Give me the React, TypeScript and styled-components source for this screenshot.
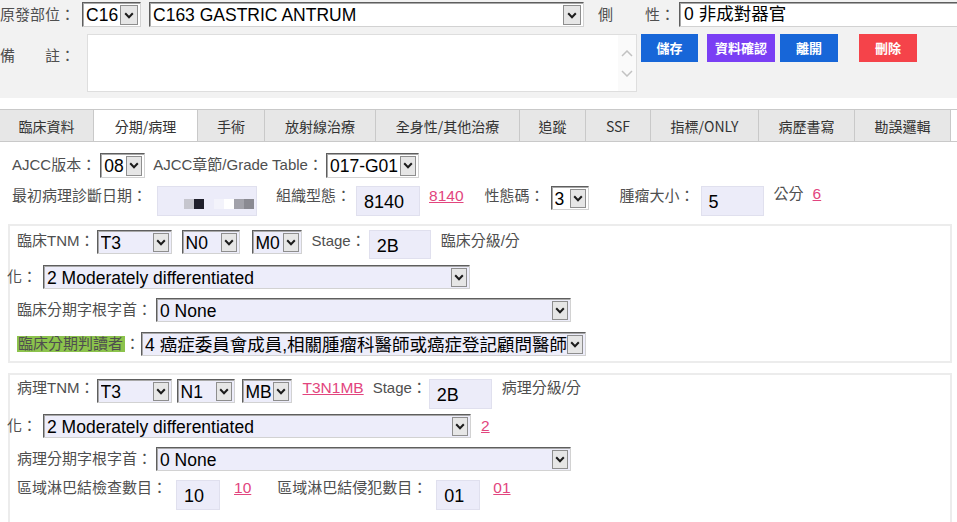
import React from 'react';
import styled, { createGlobalStyle } from 'styled-components';

const FONT = `"Liberation Sans", "Noto Sans CJK TC", sans-serif`;
const CJK = `"Noto Sans CJK TC", "Liberation Sans", sans-serif`;

const GlobalStyle = createGlobalStyle`
  html, body { margin: 0; padding: 0; background: #fff; }
  body { font-family: ${FONT}; }
`;

const Page = styled.div`
  width: 957px;
  height: 522px;
  overflow: hidden;
  background: #fff;
`;

const Header = styled.div`
  height: 98px;
  box-sizing: border-box;
  padding-top: 2px;
  background: #f2f2f2;
  display: flex;
  flex-direction: column;
`;

const Row = styled.div<{ $mt?: number; $ml?: number; $h?: number; $align?: string }>`
  display: flex;
  align-items: ${(p) => p.$align ?? 'center'};
  margin-top: ${(p) => p.$mt ?? 0}px;
  margin-left: ${(p) => p.$ml ?? 0}px;
  height: ${(p) => (p.$h ? `${p.$h}px` : 'auto')};
  white-space: nowrap;
`;

const Label = styled.span<{ $ml?: number; $mt?: number }>`
  font-family: ${FONT};
  font-size: 15px;
  line-height: 20px;
  color: #4f4f4f;
  white-space: nowrap;
  margin-left: ${(p) => p.$ml ?? 0}px;
  margin-top: ${(p) => p.$mt ?? 0}px;
`;

const Highlight = styled.span`
  display: inline-block;
  background: #8cc34c;
  height: 16px;
  line-height: 16px;
  padding: 0 2px 0 1px;
`;

const SelectFrame = styled.div<{ $w: number; $h: number; $ml: number; $bg: string }>`
  display: flex;
  align-items: center;
  box-sizing: border-box;
  flex: none;
  width: ${(p) => p.$w}px;
  height: ${(p) => p.$h}px;
  margin-left: ${(p) => p.$ml}px;
  border: 1px solid;
  border-color: #5e5e5e #d2d2d2 #d2d2d2 #5e5e5e;
  box-shadow: inset 1px 1px 0 #a8a8a8;
  background: ${(p) => p.$bg};
  padding: 2px 2px 1px 3px;
`;

const SelectText = styled.span`
  flex: 1;
  min-width: 0;
  overflow: hidden;
  font-family: ${FONT};
  font-size: 17.5px;
  line-height: 20px;
  color: #000;
  white-space: nowrap;
`;

const ArrowBox = styled.span<{ $w: number }>`
  flex: none;
  align-self: stretch;
  width: ${(p) => p.$w}px;
  box-sizing: border-box;
  background: #e6e6e6;
  border: 1px solid #8e8e8e;
  display: flex;
  align-items: center;
  justify-content: center;
`;

const Chevron = () => (
  <svg width="10" height="7" viewBox="0 0 10 7">
    <polyline points="1.2,1.3 5,5.2 8.8,1.3" fill="none" stroke="#1c1c1c" strokeWidth="2" />
  </svg>
);

type SelectProps = { value: string; w: number; h?: number; ml?: number; bg?: string; aw?: number };
const Select = ({ value, w, h = 24, ml = 0, bg = '#ededfa', aw = 16 }: SelectProps) => (
  <SelectFrame $w={w} $h={h} $ml={ml} $bg={bg}>
    <SelectText>{value}</SelectText>
    <ArrowBox $w={aw}>
      <Chevron />
    </ArrowBox>
  </SelectFrame>
);

const TextBox = styled.div<{ $w: number; $ml: number }>`
  box-sizing: border-box;
  flex: none;
  width: ${(p) => p.$w}px;
  height: 25px;
  margin-left: ${(p) => p.$ml}px;
  background: #fff;
  border: 1px solid;
  border-color: #5e5e5e #d2d2d2 #d2d2d2 #5e5e5e;
  box-shadow: inset 1px 1px 0 #a8a8a8;
  padding: 1px 0 0 4px;
  font-family: ${FONT};
  font-size: 17.5px;
  line-height: 21px;
  color: #000;
  white-space: nowrap;
`;

const Memo = styled.div`
  box-sizing: border-box;
  width: 550px;
  height: 58px;
  margin-left: 12px;
  background: #fff;
  border: 1px solid #dedede;
  display: flex;
  justify-content: flex-end;
`;

const MemoScroll = styled.div`
  width: 18px;
  display: flex;
  flex-direction: column;
  align-items: center;
  gap: 13px;
  padding-top: 15px;
  background: #fafafa;
`;

const ScrollArrow = ({ up }: { up?: boolean }) => (
  <svg width="12" height="7" viewBox="0 0 12 7">
    <polyline
      points={up ? '1,6 6,1 11,6' : '1,1 6,6 11,1'}
      fill="none"
      stroke="#c2c2c2"
      strokeWidth="1.5"
    />
  </svg>
);

const ActionButton = styled.button<{ $bg: string; $w: number; $ml: number }>`
  flex: none;
  width: ${(p) => p.$w}px;
  height: 28px;
  margin-left: ${(p) => p.$ml}px;
  padding: 0;
  border: none;
  background: ${(p) => p.$bg};
  color: #fff;
  font-family: ${CJK};
  font-weight: 700;
  font-size: 13px;
  line-height: 28px;
`;

const TabBar = styled.div`
  margin-top: 11px;
  height: 33px;
  box-sizing: border-box;
  border-top: 1px solid #c9c9c9;
  border-bottom: 1px solid #c9c9c9;
  display: flex;
  background: #fff;
`;

const Tab = styled.div<{ $w: number; $active?: boolean }>`
  width: ${(p) => p.$w}px;
  box-sizing: border-box;
  border-right: 1px solid #c9c9c9;
  background: ${(p) => (p.$active ? '#fff' : '#e7e7e7')};
  display: flex;
  align-items: center;
  justify-content: center;
  font-family: ${CJK};
  font-size: 14px;
  color: #333;
`;

const Content = styled.div`
  padding-top: 10px;
  display: flex;
  flex-direction: column;
`;

const Field = styled.div<{ $w: number; $ml: number; $h?: number }>`
  box-sizing: border-box;
  flex: none;
  width: ${(p) => p.$w}px;
  height: ${(p) => p.$h ?? 30}px;
  margin-left: ${(p) => p.$ml}px;
  background: #ececf9;
  border: 1px solid #e0e0ee;
  padding: 3px 0 0 7px;
  font-family: ${FONT};
  font-size: 18px;
  line-height: 24px;
  color: #000;
`;

const Blurred = styled.div`
  display: flex;
  padding: 9px 0 0 19px;
`;

const Pixel = styled.span<{ $c: string }>`
  width: 10px;
  height: 10px;
  background: ${(p) => p.$c};
`;

const CodeLink = styled.a<{ $ml: number; $mt?: number }>`
  font-family: ${FONT};
  font-size: 15.5px;
  line-height: 20px;
  color: #e2457e;
  text-decoration: underline;
  margin-left: ${(p) => p.$ml}px;
  margin-top: ${(p) => p.$mt ?? 0}px;
`;

const Section = styled.div<{ $mt: number }>`
  margin: ${(p) => p.$mt}px 5px 0 8px;
  border: 2px solid #ececec;
  padding: 4px 0 5px 7px;
  display: flex;
  flex-direction: column;
`;

const tabs = [
  { label: '臨床資料', w: 94 },
  { label: '分期/病理', w: 104, active: true },
  { label: '手術', w: 67 },
  { label: '放射線治療', w: 111 },
  { label: '全身性/其他治療', w: 144 },
  { label: '追蹤', w: 66 },
  { label: 'SSF', w: 65 },
  { label: '指標/ONLY', w: 108 },
  { label: '病歷書寫', w: 96 },
  { label: '勘誤邏輯', w: 96 },
];

const pixels = ['#c6c6ce', '#1f1f2b', '#ececf9', '#f3f3fb', '#ffffff', '#a2a2aa', '#8a8a92'];

export default function App() {
  return (
    <Page>
      <GlobalStyle />
      <Header>
        <Row $h={25}>
          <Label>原發部位：</Label>
          <Select value="C16" w={59} h={25} ml={7} bg="#fff" aw={18} />
          <Select value="C163 GASTRIC ANTRUM" w={435} h={25} ml={8} bg="#fff" aw={18} />
          <Label $ml={14}>側</Label>
          <Label $ml={32}>性：</Label>
          <TextBox $w={282} $ml={4}>0 非成對器官</TextBox>
        </Row>
        <Row $mt={7} $align="flex-start">
          <Label $mt={12}>備　　註：</Label>
          <Memo>
            <MemoScroll>
              <ScrollArrow up />
              <ScrollArrow />
            </MemoScroll>
          </Memo>
          <ActionButton $bg="#1766d8" $w={57} $ml={4}>儲存</ActionButton>
          <ActionButton $bg="#7a3ff4" $w={68} $ml={9}>資料確認</ActionButton>
          <ActionButton $bg="#1766d8" $w={58} $ml={5}>離開</ActionButton>
          <ActionButton $bg="#f5434a" $w={58} $ml={21}>刪除</ActionButton>
        </Row>
      </Header>

      <TabBar>
        {tabs.map((t) => (
          <Tab key={t.label} $w={t.w} $active={t.active}>
            {t.label}
          </Tab>
        ))}
      </TabBar>

      <Content>
        <Row $ml={12} $h={26}>
          <Label>AJCC版本：</Label>
          <Select value="08" w={45} h={25} ml={4} bg="#fff" />
          <Label $ml={8}>AJCC章節/Grade Table：</Label>
          <Select value="017-G01" w={93} h={25} ml={3} bg="#fff" />
        </Row>
        <Row $ml={12} $mt={8} $align="flex-start" $h={32}>
          <Label>最初病理診斷日期：</Label>
          <Field $w={100} $ml={10}>
            <Blurred>
              {pixels.map((c, i) => (
                <Pixel key={i} $c={c} />
              ))}
            </Blurred>
          </Field>
          <Label $ml={19}>組織型態：</Label>
          <Field $w={64} $ml={5}>8140</Field>
          <CodeLink $ml={9}>8140</CodeLink>
          <Label $ml={21}>性態碼：</Label>
          <Select value="3" w={38} h={24} ml={6} bg="#fff" />
          <Label $ml={31}>腫瘤大小：</Label>
          <Field $w={63} $ml={6}>5</Field>
          <Label $ml={10} $mt={-2}>公分</Label>
          <CodeLink $ml={9} $mt={-2}>6</CodeLink>
        </Row>

        <Section $mt={6}>
          <Row $align="flex-start" $h={30}>
            <Label $mt={1}>臨床TNM：</Label>
            <Select value="T3" w={75} ml={2} />
            <Select value="N0" w={58} ml={10} />
            <Select value="M0" w={50} ml={12} />
            <Label $ml={10} $mt={1}>Stage：</Label>
            <Field $w={62} $ml={3} $h={29}>2B</Field>
            <Label $ml={10} $mt={1}>臨床分級/分</Label>
          </Row>
          <Row $mt={5} $ml={-10}>
            <Label>化：</Label>
            <Select value="2 Moderately differentiated" w={427} ml={6} />
          </Row>
          <Row $mt={9}>
            <Label>臨床分期字根字首：</Label>
            <Select value="0 None" w={415} ml={4} />
          </Row>
          <Row $mt={10}>
            <Label>
              <Highlight>臨床分期判讀者</Highlight>：
            </Label>
            <Select value="4 癌症委員會成員,相關腫瘤科醫師或癌症登記顧問醫師" w={445} ml={1} />
          </Row>
        </Section>

        <Section $mt={10}>
          <Row $align="flex-start" $h={30}>
            <Label $mt={-1}>病理TNM：</Label>
            <Select value="T3" w={75} ml={2} h={24} />
            <Select value="N1" w={58} ml={5} />
            <Select value="MB" w={50} ml={7} />
            <CodeLink $ml={11} $mt={-1}>T3N1MB</CodeLink>
            <Label $ml={9} $mt={-1}>Stage：</Label>
            <Field $w={63} $ml={2}>2B</Field>
            <Label $ml={10} $mt={-1}>病理分級/分</Label>
          </Row>
          <Row $mt={5} $ml={-10}>
            <Label>化：</Label>
            <Select value="2 Moderately differentiated" w={428} ml={6} />
            <CodeLink $ml={10}>2</CodeLink>
          </Row>
          <Row $mt={9}>
            <Label>病理分期字根字首：</Label>
            <Select value="0 None" w={415} ml={4} />
          </Row>
          <Row $mt={9} $align="flex-start" $h={30}>
            <Label $mt={-2}>區域淋巴結檢查數目：</Label>
            <Field $w={44} $ml={9}>10</Field>
            <CodeLink $ml={14} $mt={-2}>10</CodeLink>
            <Label $ml={26} $mt={-2}>區域淋巴結侵犯數目：</Label>
            <Field $w={44} $ml={9}>01</Field>
            <CodeLink $ml={13} $mt={-2}>01</CodeLink>
          </Row>
          <Row $h={40} />
        </Section>
      </Content>
    </Page>
  );
}
